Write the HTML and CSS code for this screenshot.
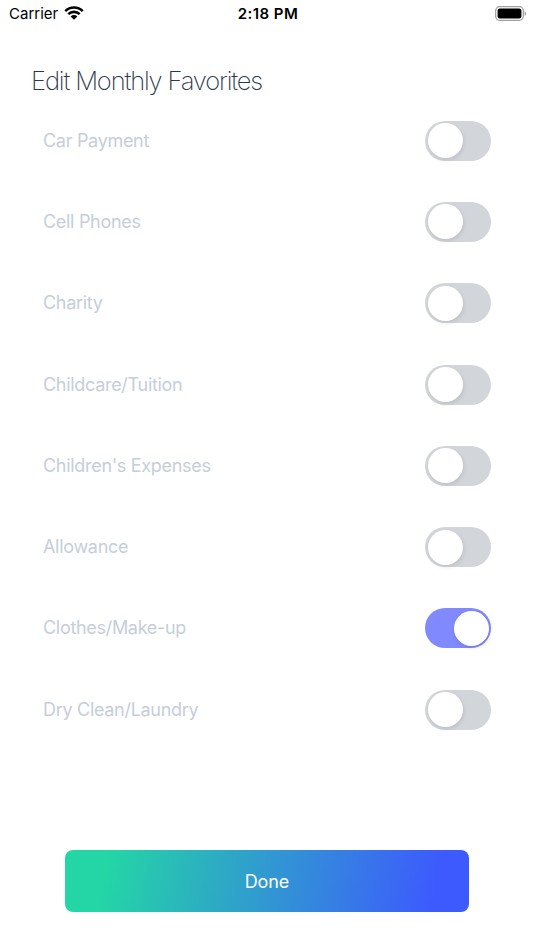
FILE: index.html
```html
<!DOCTYPE html>
<html lang="en">
<head>
    <meta charset="UTF-8">
    <meta name="viewport" content="width=device-width, initial-scale=1.0">
    <title>Edit Monthly Favorites</title>
    <link rel="stylesheet" href="styles.css">
</head>
<body>
    <header class="status-bar">
        <div class="carrier">
            <span>Carrier</span>
            <svg class="wifi" viewBox="0 0 20 14" width="20" height="14">
                <path d="M1.3 5.1a12.3 12.3 0 0 1 17.4 0M4.3 8.2a8.1 8.1 0 0 1 11.4 0" fill="none" stroke="#000" stroke-width="2.6"/>
                <path d="M10 13.8 6.6 10.4a4.8 4.8 0 0 1 6.8 0z"/>
            </svg>
        </div>
        <div class="time">2:18 PM</div>
        <svg class="battery" viewBox="0 0 32 15" width="32" height="15">
            <rect x="0.7" y="0.7" width="27.6" height="13.6" rx="4" fill="none" stroke="#a0a0a0" stroke-width="1.3"/>
            <rect x="2.6" y="2.6" width="23.8" height="9.8" rx="2.2"/>
            <path d="M29.6 5.2c2 .7 2 3.9 0 4.6z" fill="#a0a0a0"/>
        </svg>
    </header>

    <main>
        <h1>Edit Monthly Favorites</h1>
        <div class="favorites">
            <label class="favorite"><span>Car Payment</span><input type="checkbox" class="toggle"></label>
            <label class="favorite"><span>Cell Phones</span><input type="checkbox" class="toggle"></label>
            <label class="favorite"><span>Charity</span><input type="checkbox" class="toggle"></label>
            <label class="favorite"><span>Childcare/Tuition</span><input type="checkbox" class="toggle"></label>
            <label class="favorite"><span>Children's Expenses</span><input type="checkbox" class="toggle"></label>
            <label class="favorite"><span>Allowance</span><input type="checkbox" class="toggle"></label>
            <label class="favorite"><span>Clothes/Make-up</span><input type="checkbox" class="toggle" checked></label>
            <label class="favorite"><span>Dry Clean/Laundry</span><input type="checkbox" class="toggle"></label>
        </div>
    </main>

    <button type="button" class="done">Done</button>
</body>
</html>
```

FILE: styles.css
```css
* {
    box-sizing: border-box;
}
body {
    margin: 0;
    height: 950px;
    padding-bottom: 38px;
    display: flex;
    flex-direction: column;
    background-color: #fff;
    font-family: Inter, "Liberation Sans", sans-serif;
    overflow: hidden;
}
.status-bar {
    display: grid;
    grid-template-columns: 1fr auto 1fr;
    align-items: center;
    height: 27px;
    padding: 0 7px 0 9px;
    font-size: 15px;
    color: #000;
}
.carrier {
    display: flex;
    align-items: center;
    gap: 6px;
}
.wifi {
    margin-top: -2px;
}
.time {
    font-weight: 600;
    letter-spacing: 0.45px;
}
.battery {
    justify-self: end;
}
main {
    flex: 1;
}
h1 {
    margin: 34px 0 0 31px;
    height: 39px;
    line-height: 40px;
    font-size: 25.5px;
    font-weight: 200;
    letter-spacing: -1.15px;
    color: #2e384d;
}
.favorites {
    display: grid;
    grid-auto-rows: 81.3px;
    padding: 0 43px;
}
.favorite {
    display: flex;
    align-items: center;
    justify-content: space-between;
    font-size: 18px;
    letter-spacing: -0.3px;
    color: #c6ceda;
}
.favorite span {
    margin-top: -1px;
}
.toggle {
    appearance: none;
    width: 66px;
    height: 40px;
    margin: 0;
    padding: 2.5px;
    display: flex;
    border-radius: 20px;
    background-color: #d2d6db;
}
.toggle::before {
    content: "";
    width: 35px;
    height: 35px;
    border-radius: 50%;
    background-color: #fff;
    box-shadow: 1px 2px 4px rgba(0, 0, 0, 0.1);
}
.toggle:checked {
    justify-content: flex-end;
    background-color: #8189ff;
}
.done {
    height: 62px;
    margin: 0 65px;
    border: none;
    border-radius: 8px;
    background: linear-gradient(100deg, #24d6a5 10%, #3d5afe 91%);
    color: #fff;
    font-family: inherit;
    font-size: 18px;
    letter-spacing: -0.1px;
}
```
